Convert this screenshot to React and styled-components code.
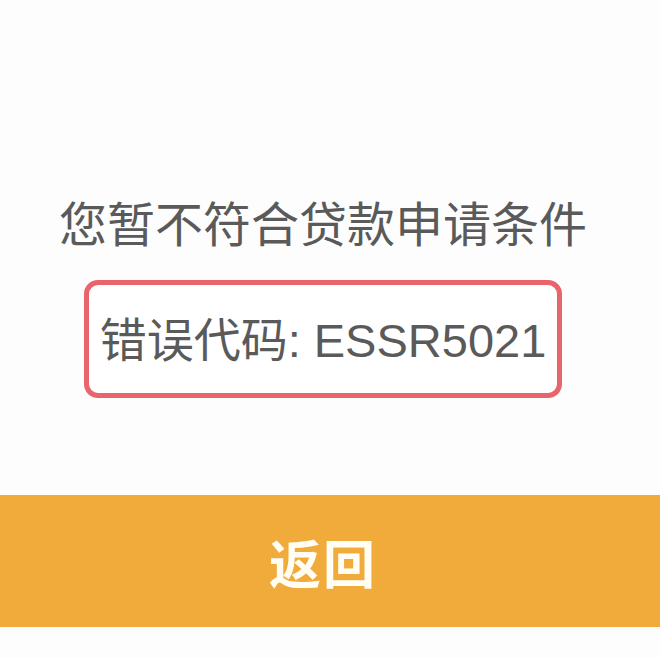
import styled, { createGlobalStyle } from 'styled-components';

const GlobalStyle = createGlobalStyle`
  html, body {
    margin: 0;
    padding: 0;
    background: #fdfdfd;
  }
  body {
    font-family: "Noto Sans CJK SC", "Noto Sans", sans-serif;
  }
`;

const Page = styled.div`
  width: 660px;
  height: 658px;
  display: flex;
  flex-direction: column;
  background: #fdfdfd;
  overflow: hidden;
`;

const Content = styled.div`
  display: flex;
  flex-direction: column;
  align-items: center;
  padding: 188px 14px 0 0;
`;

const Title = styled.div`
  font-size: 48px;
  line-height: 67px;
  color: #5a5a5a;
  white-space: nowrap;
`;

const CodeBox = styled.div`
  box-sizing: border-box;
  width: 478px;
  height: 118px;
  margin-top: 25px;
  border: 5px solid #ea646c;
  border-radius: 14px;
  background: #fff;
  display: flex;
  align-items: center;
  justify-content: center;
`;

const CodeText = styled.span`
  font-family: "Liberation Sans", "Noto Sans CJK SC", sans-serif;
  font-size: 47px;
  line-height: 1;
  color: #5a5a5a;
  white-space: nowrap;
  padding-top: 2px;
`;

const BackBar = styled.button`
  margin-top: 97px;
  height: 132px;
  width: 100%;
  border: none;
  padding: 0 14px 0 0;
  background: #f0ab3a;
  color: #fffdf4;
  font-family: "Noto Sans CJK SC", sans-serif;
  font-size: 52px;
  font-weight: 700;
  letter-spacing: 2px;
  cursor: pointer;
`;

export default function App() {
  return (
    <>
      <GlobalStyle />
      <Page>
        <Content>
          <Title>您暂不符合贷款申请条件</Title>
          <CodeBox>
            <CodeText>错误代码: ESSR5021</CodeText>
          </CodeBox>
        </Content>
        <BackBar>返回</BackBar>
      </Page>
    </>
  );
}
